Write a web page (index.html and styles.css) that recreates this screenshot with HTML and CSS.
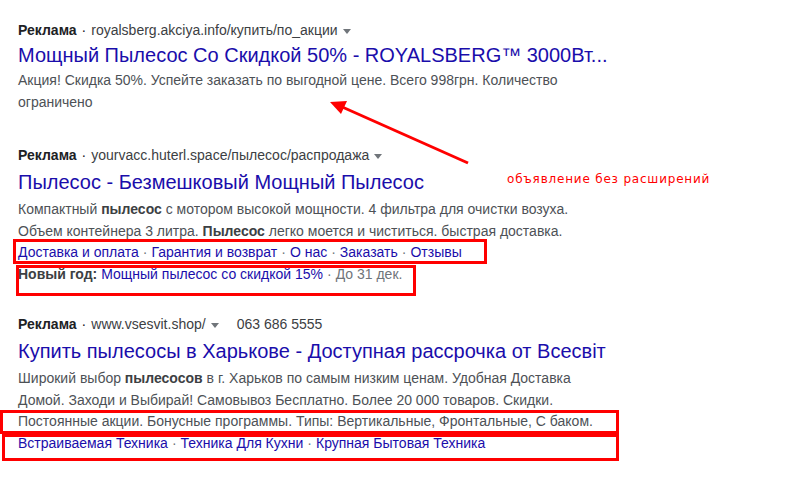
FILE: index.html
```html
<!DOCTYPE html>
<html lang="ru">
<head>
<meta charset="utf-8">
<link rel="stylesheet" href="styles.css">
</head>
<body>
<div class="page">
  <div class="ad ad1">
    <div class="hdr"><b class="label">Реклама</b><span class="dot">·</span><span class="url">royalsberg.akciya.info/купить/по_акции</span><span class="caret"></span></div>
    <div class="title">Мощный Пылесос Со Скидкой 50% - ROYALSBERG™ 3000Вт...</div>
    <div class="desc">Акция! Скидка 50%. Успейте заказать по выгодной цене. Всего 998грн. Количество<br>ограничено</div>
  </div>

  <div class="ad ad2">
    <div class="hdr"><b class="label">Реклама</b><span class="dot">·</span><span class="url">yourvacc.huterl.space/пылесос/распродажа</span><span class="caret"></span></div>
    <div class="title">Пылесос - Безмешковый Мощный Пылесос</div>
    <div class="desc">Компактный <b>пылесос</b> с мотором высокой мощности. 4 фильтра для очистки возуха.<br>Объем контейнера 3 литра. <b>Пылесос</b> легко моется и чиститься. быстрая доставка.</div>
    <div class="links"><span class="lk">Доставка и оплата</span><span class="sep">·</span><span class="lk">Гарантия и возврат</span><span class="sep">·</span><span class="lk">О нас</span><span class="sep">·</span><span class="lk">Заказать</span><span class="sep">·</span><span class="lk">Отзывы</span></div>
    <div class="promo"><b>Новый год:</b> <span class="lk">Мощный пылесос со скидкой 15%</span><span class="sep">·</span><span class="muted">До 31 дек.</span></div>
  </div>

  <div class="ad ad3">
    <div class="hdr"><b class="label">Реклама</b><span class="dot">·</span><span class="url">www.vsesvit.shop/</span><span class="caret"></span><span class="phone">063 686 5555</span></div>
    <div class="title">Купить пылесосы в Харькове - Доступная рассрочка от Всесвіт</div>
    <div class="desc">Широкий выбор <b>пылесосов</b> в г. Харьков по самым низким ценам. Удобная Доставка<br>Домой. Заходи и Выбирай! Самовывоз Бесплатно. Более 20 000 товаров. Скидки.<br>Постоянные акции. Бонусные программы. Типы: Вертикальные, Фронтальные, С баком.</div>
    <div class="links"><span class="lk">Встраиваемая Техника</span><span class="sep">·</span><span class="lk">Техника Для Кухни</span><span class="sep">·</span><span class="lk">Крупная Бытовая Техника</span></div>
  </div>
</div>

<div class="note">объявление без расширений</div>
<svg class="arrow" width="791" height="479" viewBox="0 0 791 479">
  <line x1="468" y1="163" x2="340" y2="106" stroke="#ff0000" stroke-width="3"/>
  <polygon points="330,102 347,101 341,114" fill="#ff0000"/>
</svg>
<div class="box box-a"></div>
<div class="box box-b"></div>
<div class="box box-c"></div>
<div class="box box-d"></div>
</body>
</html>
```
FILE: styles.css
```css
html, body {
  margin: 0;
  padding: 0;
  background: #fff;
}
body {
  width: 791px;
  height: 479px;
  overflow: hidden;
  position: relative;
  font-family: "Liberation Sans", Arial, sans-serif;
}
.page {
  padding: 19px 0 0 18px;
  display: flex;
  flex-direction: column;
}
.ad1 { margin-bottom: 31px; }
.ad2 { margin-bottom: 28px; }
.hdr {
  font-size: 14px;
  line-height: 22px;
  color: #202124;
  display: flex;
  align-items: center;
  white-space: nowrap;
}
.label { color: #202124; font-weight: bold; }
.dot { padding: 0 5px; }
.url { color: #3c4043; }
.caret {
  width: 0;
  height: 0;
  border-left: 4px solid transparent;
  border-right: 4px solid transparent;
  border-top: 5px solid #70757a;
  margin-left: 5px;
  margin-top: 2px;
}
.phone { margin-left: 18px; color: #3c4043; }
.title {
  font-size: 20px;
  line-height: 32px;
  color: #1a0dab;
  white-space: nowrap;
}
.ad1 .title { line-height: 28px; }
.desc, .links, .promo {
  font-size: 14px;
  line-height: 21px;
  color: #4d5156;
  white-space: nowrap;
}
.desc { margin-top: 1px; line-height: 21.5px; }
.promo { margin-top: 1px; }
.desc b, .promo b { color: #3c4043; }
.lk { color: #1a0dab; }
.sep { color: #70757a; padding: 0 4px; }
.muted { color: #70757a; }
.note {
  position: absolute;
  left: 507px;
  top: 172px;
  font-family: "DejaVu Sans", Verdana, sans-serif;
  font-size: 12px;
  letter-spacing: 0.8px;
  color: #ff0000;
}
.arrow {
  position: absolute;
  left: 0;
  top: 0;
}
.box {
  position: absolute;
  border: 3px solid #ff0000;
  box-sizing: border-box;
}
.box-a { left: 13px; top: 239px; width: 474px; height: 25px; }
.box-b { left: 16px; top: 265px; width: 400px; height: 31px; }
.box-c { left: 0; top: 410px; width: 619px; height: 24px; }
.box-d { left: 2px; top: 434px; width: 617px; height: 27px; }
```
